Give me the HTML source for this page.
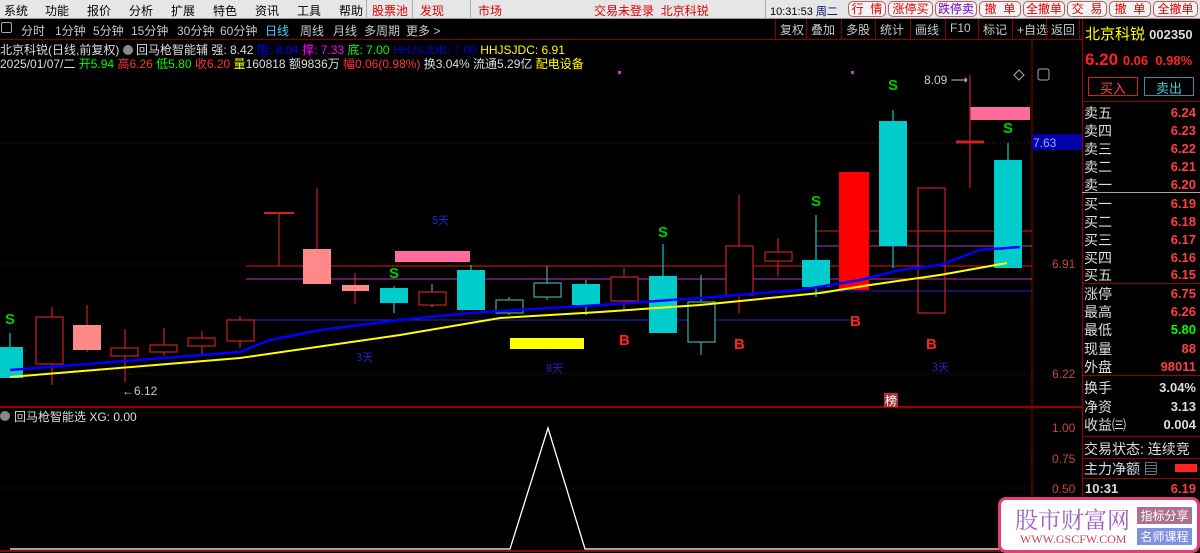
<!DOCTYPE html>
<html><head><meta charset="utf-8"><style>
*{margin:0;padding:0;box-sizing:border-box}
body{width:1200px;height:553px;background:#000;overflow:hidden;position:relative;font-family:"Liberation Sans","Noto Sans CJK SC",sans-serif;font-size:12px;color:#c0c0c0}
.a{position:absolute;white-space:nowrap}
#menu{left:0;top:0;width:1200px;height:19px;background:#e6e6e6;border-bottom:1px solid #999}
#menu span{position:absolute;top:2px;color:#000;font-size:12px}
.btn{position:absolute;top:1px;height:16px;border:1px solid #a66;border-radius:5px;background:#f3f3f3;color:#d00;font-size:12px;text-align:center;line-height:14px}
#bar2 span{position:absolute;top:22px;color:#c8c8c8;font-size:12px}
.tb{position:absolute;top:19px;height:20px;border-left:1px solid #800;color:#c8c8c8;padding:2px 4px;font-size:12px}
.rp{position:absolute;left:1084px;font-size:14px;color:#ddd}
.rv{position:absolute;right:4px;font-size:13px;font-weight:bold;color:#ff4040}
.hl{position:absolute;left:1082px;width:118px;height:1px;background:#900}
</style></head><body>
<div id="menu" class="a">
<span style="left:4px">系统</span><span style="left:45px">功能</span><span style="left:87px">报价</span><span style="left:129px">分析</span><span style="left:171px">扩展</span><span style="left:213px">特色</span><span style="left:255px">资讯</span><span style="left:297px">工具</span><span style="left:339px">帮助</span>
<span style="left:372px;color:#d00">股票池</span><span style="left:420px;color:#d00">发现</span><span style="left:478px;color:#d00">市场</span>
<span style="left:594px;color:#d00">交易未登录&nbsp;&nbsp;北京科锐</span>
<span style="left:770px;font-size:11px;top:3px">10:31:53 <b style="font-weight:normal;color:#006">周二</b></span>
</div>
<div style="position:absolute;left:366px;top:0;width:1px;height:19px;background:#aaa"></div>
<div style="position:absolute;left:412px;top:0;width:1px;height:19px;background:#aaa"></div>
<div style="position:absolute;left:470px;top:0;width:1px;height:19px;background:#aaa"></div>
<div style="position:absolute;left:765px;top:0;width:1px;height:19px;background:#aaa"></div>
<div class="btn" style="left:848px;width:38px">行&nbsp;&nbsp;情</div>
<div class="btn" style="left:888px;width:45px">涨停买</div>
<div class="btn" style="left:935px;width:42px;color:#70c">跌停卖</div>
<div class="btn" style="left:979px;width:42px">撤&nbsp;&nbsp;单</div>
<div class="btn" style="left:1023px;width:42px">全撤单</div>
<div class="btn" style="left:1067px;width:40px">交&nbsp;&nbsp;易</div>
<div class="btn" style="left:1109px;width:42px">撤&nbsp;&nbsp;单</div>
<div class="btn" style="left:1153px;width:45px">全撤单</div>
<div id="bar2">
<span style="left:1px;top:22px;width:11px;height:11px;border:1px solid #aaa;border-radius:2px"></span>
<span style="left:21px">分时</span><span style="left:55px">1分钟</span><span style="left:93px">5分钟</span><span style="left:131px">15分钟</span><span style="left:177px">30分钟</span><span style="left:220px">60分钟</span><span style="left:265px;color:#4cf">日线</span><span style="left:300px">周线</span><span style="left:333px">月线</span><span style="left:364px">多周期</span><span style="left:406px">更多 &gt;</span>
</div>
<div class="tb" style="left:775px">复权</div><div class="tb" style="left:806px">叠加</div><div class="tb" style="left:841px">多股</div><div class="tb" style="left:875px">统计</div><div class="tb" style="left:910px">画线</div><div class="tb" style="left:945px">F10</div><div class="tb" style="left:978px">标记</div><div class="tb" style="left:1012px">+自选</div><div class="tb" style="left:1046px;border-right:1px solid #800">返回</div>
<div style="position:absolute;left:0;top:39px;width:1082px;height:1px;background:#800"></div>

<div class="a" style="left:0;top:41px;color:#ddd">北京科锐(日线,前复权) <span style="display:inline-block;width:10px;height:10px;border-radius:5px;background:#888;vertical-align:-1px"></span> 回马枪智能辅 强: 8.42 <span style="color:#00f">阻: 8.04</span> <span style="color:#f0f">撑: 7.33</span> <span style="color:#0f0">底: 7.00</span> <span style="color:#00c">HHJSJDB: 7.00</span> <span style="color:#ff0">HHJSJDC: 6.91</span></div>
<div class="a" style="left:0;top:55px;color:#ddd">2025/01/07/二 <span style="color:#0f0">开5.94</span> <span style="color:#f33">高6.26</span> <span style="color:#0f0">低5.80</span> <span style="color:#f33">收6.20</span> <span style="color:#ff0">量</span>160818 额9836万 <span style="color:#f33">幅0.06(0.98%)</span> 换3.04% 流通5.29亿 <span style="color:#ff0">配电设备</span></div>

<svg class="a" style="left:0;top:0" width="1082" height="553">
<g stroke="#800" stroke-dasharray="1,3" stroke-width="1">
<line x1="0" y1="143" x2="1032" y2="143"/><line x1="0" y1="264" x2="1032" y2="264"/><line x1="0" y1="374" x2="1032" y2="374"/>
<line x1="0" y1="488" x2="1032" y2="488"/><line x1="0" y1="459" x2="1032" y2="459" stroke-opacity=".3"/>
</g>
<line x1="1032" y1="40" x2="1032" y2="553" stroke="#900"/>
<line x1="0" y1="407" x2="1082" y2="407" stroke="#900" stroke-width="2"/>
<line x1="0" y1="551" x2="1082" y2="551" stroke="#900" stroke-width="2"/>
<!-- horizontal level lines -->
<line x1="246" y1="266" x2="1032" y2="266" stroke="#c22"/>
<line x1="246" y1="279" x2="1032" y2="279" stroke="#b3b"/>
<line x1="815" y1="231" x2="1032" y2="231" stroke="#c22"/>
<line x1="815" y1="246" x2="1032" y2="246" stroke="#b3b"/>
<line x1="815" y1="291" x2="1032" y2="291" stroke="#22c"/>
<line x1="250" y1="320" x2="850" y2="320" stroke="#22c"/>
<!-- pink/yellow bars -->
<rect x="395" y="251" width="75" height="11" fill="#ff6b9a"/>
<rect x="970" y="107" width="60" height="13" fill="#ff6b9a"/>
<rect x="510" y="338" width="74" height="11" fill="#ff0"/>
<!-- candles -->
<g stroke-width="1.2">
<line x1="10" y1="333" x2="10" y2="347" stroke="#0cc"/><rect x="0" y="347" width="23" height="31" fill="#0cc"/>
<line x1="52" y1="307" x2="52" y2="385" stroke="#c22"/><rect x="36" y="317" width="27" height="47" fill="#000" stroke="#c22"/>
<line x1="87" y1="305" x2="87" y2="352" stroke="#c22"/><rect x="73" y="325" width="28" height="25" fill="#f88"/>
<line x1="125" y1="329" x2="125" y2="382" stroke="#c22"/><rect x="111" y="348" width="27" height="8" fill="#000" stroke="#c22"/>
<line x1="164" y1="328" x2="164" y2="356" stroke="#c22"/><rect x="150" y="345" width="27" height="7" fill="#000" stroke="#c22"/>
<line x1="202" y1="331" x2="202" y2="355" stroke="#c22"/><rect x="188" y="338" width="27" height="8" fill="#000" stroke="#c22"/>
<line x1="240" y1="316" x2="240" y2="348" stroke="#c22"/><rect x="227" y="320" width="27" height="21" fill="#000" stroke="#c22"/>
<line x1="279" y1="213" x2="279" y2="266" stroke="#c22"/><line x1="264" y1="213" x2="294" y2="213" stroke="#c22" stroke-width="2"/>
<line x1="317" y1="188" x2="317" y2="249" stroke="#c22"/><rect x="303" y="249" width="28" height="35" fill="#f88"/>
<line x1="355" y1="273" x2="355" y2="304" stroke="#c22"/><rect x="342" y="285" width="27" height="6" fill="#f88"/>
<line x1="394" y1="286" x2="394" y2="313" stroke="#0cc"/><rect x="380" y="288" width="28" height="15" fill="#0cc"/>
<line x1="432" y1="284" x2="432" y2="307" stroke="#4aa"/><rect x="419" y="292" width="27" height="13" fill="#000" stroke="#c22"/>
<line x1="471" y1="265" x2="471" y2="270" stroke="#0cc"/><rect x="457" y="270" width="28" height="40" fill="#0cc"/>
<line x1="509" y1="297" x2="509" y2="315" stroke="#4aa"/><rect x="496" y="300" width="27" height="13" fill="#000" stroke="#4aa"/>
<line x1="547" y1="266" x2="547" y2="300" stroke="#4aa"/><rect x="534" y="283" width="27" height="14" fill="#000" stroke="#4aa"/>
<line x1="586" y1="280" x2="586" y2="315" stroke="#0cc"/><rect x="572" y="284" width="28" height="21" fill="#0cc"/>
<line x1="624" y1="268" x2="624" y2="310" stroke="#c22"/><rect x="611" y="277" width="27" height="24" fill="#000" stroke="#c22"/>
<line x1="663" y1="244" x2="663" y2="276" stroke="#0cc"/><rect x="649" y="276" width="28" height="57" fill="#0cc"/>
<line x1="701" y1="275" x2="701" y2="355" stroke="#4aa"/><rect x="688" y="302" width="27" height="40" fill="#000" stroke="#4aa"/>
<line x1="739" y1="195" x2="739" y2="313" stroke="#c22"/><rect x="726" y="246" width="27" height="49" fill="#000" stroke="#c22"/>
<line x1="778" y1="238" x2="778" y2="276" stroke="#c22"/><rect x="765" y="252" width="27" height="9" fill="#000" stroke="#c22"/>
<line x1="816" y1="215" x2="816" y2="297" stroke="#0cc"/><rect x="802" y="260" width="28" height="27" fill="#0cc"/>
<rect x="839" y="172" width="30" height="118" fill="#f00"/>
<line x1="893" y1="110" x2="893" y2="268" stroke="#0cc"/><rect x="879" y="121" width="28" height="125" fill="#0cc"/>
<rect x="918" y="188" width="27" height="125" fill="none" stroke="#c22"/>
<line x1="970" y1="75" x2="970" y2="188" stroke="#c22"/><line x1="956" y1="142" x2="984" y2="142" stroke="#c22" stroke-width="3"/>
<line x1="1008" y1="143" x2="1008" y2="160" stroke="#0cc"/><rect x="994" y="160" width="28" height="108" fill="#0cc"/>
</g>
<!-- MAs -->
<polyline fill="none" stroke="#00f" stroke-width="2.5" points="10,370 240,352 270,340 320,330 400,320 470,313 600,305 700,298 800,290 860,280 900,270 940,265 980,250 1020,247"/>
<polyline fill="none" stroke="#ff0" stroke-width="2" points="10,377 240,358 400,335 500,318 600,312 700,305 820,293 870,285 940,275 1007,263"/>
<!-- markers -->
<g fill="#0c0" font-size="15" font-weight="bold" font-family="Liberation Sans">
<text x="5" y="324">S</text><text x="389" y="278">S</text><text x="658" y="237">S</text><text x="811" y="206">S</text><text x="888" y="90">S</text><text x="1003" y="133">S</text>
</g>
<g fill="#f22" font-size="15" font-weight="bold" font-family="Liberation Sans">
<text x="619" y="345">B</text><text x="734" y="349">B</text><text x="850" y="326">B</text><text x="926" y="349">B</text>
</g>
<g fill="#22c" font-size="11" font-family="Noto Sans CJK SC">
<text x="432" y="224">5天</text><text x="356" y="361">3天</text><text x="546" y="372">8天</text><text x="932" y="371">3天</text>
</g>
<rect x="884" y="393" width="14" height="14" fill="#a33"/><text x="885" y="405" fill="#fff" font-size="12" font-family="Noto Sans CJK SC">榜</text>
<text x="122" y="395" fill="#ccc" font-size="12" font-family="Liberation Sans">←6.12</text>
<text x="924" y="84" fill="#ccc" font-size="12" font-family="Liberation Sans">8.09 ⟶</text>
<rect x="618" y="71" width="3" height="3" fill="#c3c"/><rect x="851" y="71" width="3" height="3" fill="#c3c"/>
<path d="M1019 70l5 5-5 5-5-5z" fill="none" stroke="#aaa"/><rect x="1038" y="69" width="11" height="11" rx="2" fill="none" stroke="#aaa"/>
<rect x="1032" y="134" width="50" height="16" fill="#00a"/><text x="1033" y="147" fill="#aaf" font-size="12">7.63</text>
<text x="1052" y="268" fill="#c44" font-size="12">6.91</text><text x="1052" y="378" fill="#c44" font-size="12">6.22</text>
<text x="1052" y="432" fill="#c44" font-size="12">1.00</text><text x="1052" y="463" fill="#c44" font-size="12">0.75</text><text x="1052" y="493" fill="#c44" font-size="12">0.50</text>
<!-- lower indicator -->
<polyline fill="none" stroke="#fff" stroke-width="1.3" points="10,549 510,549 548,428 585,549 1032,549"/>
<circle cx="5" cy="416" r="5" fill="#888"/>
<text x="14" y="421" fill="#ddd" font-size="12" font-family="Liberation Sans,Noto Sans CJK SC">回马枪智能选 XG: 0.00</text>
</svg>

<!-- right panel -->
<div style="position:absolute;left:1082px;top:19px;width:1px;height:534px;background:#900"></div>
<div class="a" style="left:1085px;top:23px;color:#ff0;font-size:15px">北京科锐 <span style="color:#ddd;font-size:13px;font-weight:bold">002350</span></div>
<div class="a" style="left:1085px;top:50px;color:#f22;font-size:17px;font-weight:bold">6.20 <span style="font-size:13px">0.06&nbsp; 0.98%</span></div>
<div class="a" style="left:1088px;top:77px;width:50px;height:19px;border:1px solid #c22;color:#f44;text-align:center;font-size:13px">买入</div>
<div class="a" style="left:1144px;top:77px;width:50px;height:19px;border:1px solid #48a;color:#4cc;text-align:center;font-size:13px">卖出</div>
<div class="hl" style="top:101px"></div>
<div class="rp" style="top:103px">卖五</div><div class="rv" style="top:105px">6.24</div>
<div class="rp" style="top:121px">卖四</div><div class="rv" style="top:123px">6.23</div>
<div class="rp" style="top:139px">卖三</div><div class="rv" style="top:141px">6.22</div>
<div class="rp" style="top:157px">卖二</div><div class="rv" style="top:159px">6.21</div>
<div class="rp" style="top:175px">卖一</div><div class="rv" style="top:177px">6.20</div>
<div class="hl" style="top:192px;background:#aa8"></div>
<div class="rp" style="top:194px">买一</div><div class="rv" style="top:196px">6.19</div>
<div class="rp" style="top:212px">买二</div><div class="rv" style="top:214px">6.18</div>
<div class="rp" style="top:230px">买三</div><div class="rv" style="top:232px">6.17</div>
<div class="rp" style="top:248px">买四</div><div class="rv" style="top:250px">6.16</div>
<div class="rp" style="top:265px">买五</div><div class="rv" style="top:267px">6.15</div>
<div class="hl" style="top:283px"></div>
<div class="rp" style="top:284px">涨停</div><div class="rv" style="top:286px">6.75</div>
<div class="rp" style="top:302px">最高</div><div class="rv" style="top:304px">6.26</div>
<div class="rp" style="top:320px">最低</div><div class="rv" style="top:322px;color:#0f0">5.80</div>
<div class="rp" style="top:339px">现量</div><div class="rv" style="top:341px">88</div>
<div class="rp" style="top:357px">外盘</div><div class="rv" style="top:359px">98011</div>
<div class="hl" style="top:375px"></div>
<div class="rp" style="top:378px">换手</div><div class="rv" style="top:380px;color:#ddd">3.04%</div>
<div class="rp" style="top:397px">净资</div><div class="rv" style="top:399px;color:#ddd">3.13</div>
<div class="rp" style="top:415px">收益㈢</div><div class="rv" style="top:417px;color:#ddd">0.004</div>
<div class="hl" style="top:436px"></div>
<div class="rp" style="top:439px">交易状态: 连续竞</div>
<div class="hl" style="top:458px"></div>
<div class="rp" style="top:459px">主力净额 ▤</div>
<div class="a" style="left:1175px;top:464px;width:22px;height:8px;background:#f22"></div>
<div class="hl" style="top:478px"></div>
<div class="a" style="left:1085px;top:481px;color:#ddd;font-size:13px;font-weight:bold">10:31</div><div class="rv" style="top:481px">6.19</div>

<!-- watermark -->
<div class="a" style="left:998px;top:497px;width:202px;height:56px;background:#fff;border:3px solid #e0407a;border-radius:8px"></div>
<div class="a" style="left:1015px;top:502px;font-size:23px;color:#a060c0;font-family:'Noto Serif CJK SC',serif">股市财富网</div>
<div class="a" style="left:1020px;top:532px;font-size:12px;color:#d04060;font-family:'Liberation Serif',serif">WWW.GSCFW.COM</div>
<div class="a" style="left:1137px;top:507px;width:55px;height:17px;background:#b07090;color:#fff;font-size:12px;text-align:center">指标分享</div>
<div class="a" style="left:1137px;top:528px;width:55px;height:17px;background:#8090e0;color:#fff;font-size:12px;text-align:center">名师课程</div>
</body></html>
